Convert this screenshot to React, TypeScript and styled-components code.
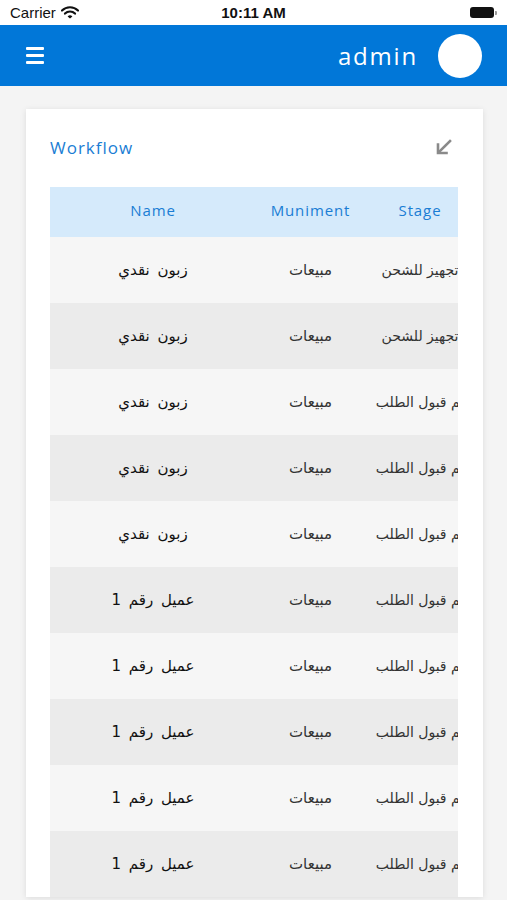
import React from 'react';
import styled, { createGlobalStyle } from 'styled-components';

const GlobalStyle = createGlobalStyle`
  html, body {
    margin: 0;
    padding: 0;
    background: #f4f4f4;
  }
  * {
    box-sizing: border-box;
  }
`;

const Page = styled.div`
  width: 507px;
  height: 900px;
  overflow: hidden;
  background: #f4f4f4;
  font-family: 'Open Sans', 'DejaVu Sans', sans-serif;
`;

const StatusBar = styled.div`
  height: 25px;
  background: #ffffff;
  display: grid;
  grid-template-columns: 1fr auto 1fr;
  align-items: center;
  padding: 0 10px;
  font-family: 'Liberation Sans', Arial, sans-serif;
  font-size: 15px;
  color: #111;
`;

const Carrier = styled.div`
  display: flex;
  align-items: center;
  gap: 5px;
`;

const Clock = styled.div`
  font-weight: 600;
`;

const Battery = styled.div`
  justify-self: end;
  display: flex;
  align-items: center;
`;

const BatteryBody = styled.div`
  width: 24px;
  height: 11px;
  border-radius: 3px;
  background: #111;
`;

const BatteryCap = styled.div`
  width: 2px;
  height: 4px;
  margin-left: 1px;
  border-radius: 0 1px 1px 0;
  background: #999;
`;

const Header = styled.header`
  height: 61px;
  background: #0177d8;
  display: flex;
  align-items: center;
  justify-content: space-between;
  padding: 0 25px 0 26px;
`;

const MenuButton = styled.div`
  width: 18px;
  display: flex;
  flex-direction: column;
  gap: 4px;
`;

const MenuLine = styled.span`
  display: block;
  height: 3px;
  border-radius: 1px;
  background: #ffffff;
`;

const User = styled.div`
  display: flex;
  align-items: center;
  gap: 20px;
`;

const UserName = styled.span`
  color: #ffffff;
  font-size: 24px;
  letter-spacing: 1.8px;
`;

const Avatar = styled.div`
  width: 44px;
  height: 44px;
  border-radius: 50%;
  background: #ffffff;
`;

const Content = styled.main`
  padding: 23px 24px 0 26px;
`;

const Card = styled.section`
  background: #ffffff;
  box-shadow: 0 1px 6px rgba(0, 0, 0, 0.1);
  padding: 0 25px 0 24px;
`;

const CardHead = styled.div`
  height: 78px;
  display: flex;
  align-items: center;
  justify-content: space-between;
  padding: 0 6px 2px 0;
`;

const CardTitle = styled.h2`
  margin: 0;
  font-size: 17px;
  font-weight: 400;
  letter-spacing: 1px;
  color: #1a7dd4;
`;

const TableScroll = styled.div`
  width: 100%;
  overflow: hidden;
`;

const Row = styled.div<{ tone: 'head' | 'light' | 'dark' }>`
  width: 425px;
  display: grid;
  grid-template-columns: 206px 109px 110px;
  align-items: center;
  height: ${p => (p.tone === 'head' ? '50px' : '66px')};
  background: ${p => (p.tone === 'head' ? '#d5eafb' : p.tone === 'light' ? '#f6f6f6' : '#ebebeb')};
`;

const HeadCell = styled.div`
  text-align: center;
  font-size: 15px;
  letter-spacing: 0.9px;
  color: #1a7dd4;
  padding-bottom: 4px;
`;

const Cell = styled.div<{ strong?: boolean; compact?: boolean }>`
  direction: rtl;
  text-align: center;
  white-space: nowrap;
  font-family: 'DejaVu Sans', sans-serif;
  font-size: ${p => (p.compact ? '14px' : '15px')};
  word-spacing: ${p => (p.compact ? '0' : '3px')};
  color: ${p => (p.strong ? '#111' : '#333')};
`;

const rows = [
  { name: 'زبون نقدي', doc: 'مبيعات', stage: 'تجهيز للشحن' },
  { name: 'زبون نقدي', doc: 'مبيعات', stage: 'تجهيز للشحن' },
  { name: 'زبون نقدي', doc: 'مبيعات', stage: 'تم قبول الطلب' },
  { name: 'زبون نقدي', doc: 'مبيعات', stage: 'تم قبول الطلب' },
  { name: 'زبون نقدي', doc: 'مبيعات', stage: 'تم قبول الطلب' },
  { name: 'عميل رقم 1', doc: 'مبيعات', stage: 'تم قبول الطلب' },
  { name: 'عميل رقم 1', doc: 'مبيعات', stage: 'تم قبول الطلب' },
  { name: 'عميل رقم 1', doc: 'مبيعات', stage: 'تم قبول الطلب' },
  { name: 'عميل رقم 1', doc: 'مبيعات', stage: 'تم قبول الطلب' },
  { name: 'عميل رقم 1', doc: 'مبيعات', stage: 'تم قبول الطلب' },
];

const Wifi = () => (
  <svg width="18" height="13" viewBox="0 0 18 13">
    <path d="M1 4.5a11.5 11.5 0 0 1 16 0" stroke="#111" strokeWidth="2.2" fill="none" strokeLinecap="round" />
    <path d="M4 7.6a7 7 0 0 1 10 0" stroke="#111" strokeWidth="2.2" fill="none" strokeLinecap="round" />
    <path d="M6.6 10.4L9 12.6l2.4-2.2a3.4 3.4 0 0 0-4.8 0z" fill="#111" />
  </svg>
);

const CollapseIcon = () => (
  <svg width="17" height="17" viewBox="0 0 17 17">
    <path d="M15 2L4 13" stroke="#8a8a8a" strokeWidth="2.6" strokeLinecap="square" fill="none" />
    <path d="M3 5.5V14h8.5" stroke="#8a8a8a" strokeWidth="2.6" strokeLinecap="square" fill="none" />
  </svg>
);

const App: React.FC = () => {
  return (
    <Page>
      <GlobalStyle />
      <StatusBar>
        <Carrier>
          Carrier <Wifi />
        </Carrier>
        <Clock>10:11 AM</Clock>
        <Battery>
          <BatteryBody />
          <BatteryCap />
        </Battery>
      </StatusBar>
      <Header>
        <MenuButton>
          <MenuLine />
          <MenuLine />
          <MenuLine />
        </MenuButton>
        <User>
          <UserName>admin</UserName>
          <Avatar />
        </User>
      </Header>
      <Content>
        <Card>
          <CardHead>
            <CardTitle>Workflow</CardTitle>
            <CollapseIcon />
          </CardHead>
          <TableScroll>
            <Row tone="head">
              <HeadCell>Name</HeadCell>
              <HeadCell>Muniment</HeadCell>
              <HeadCell>Stage</HeadCell>
            </Row>
            {rows.map((r, i) => (
              <Row key={i} tone={i % 2 === 0 ? 'light' : 'dark'}>
                <Cell strong>{r.name}</Cell>
                <Cell>{r.doc}</Cell>
                <Cell compact>{r.stage}</Cell>
              </Row>
            ))}
          </TableScroll>
        </Card>
      </Content>
    </Page>
  );
};

export default App;
